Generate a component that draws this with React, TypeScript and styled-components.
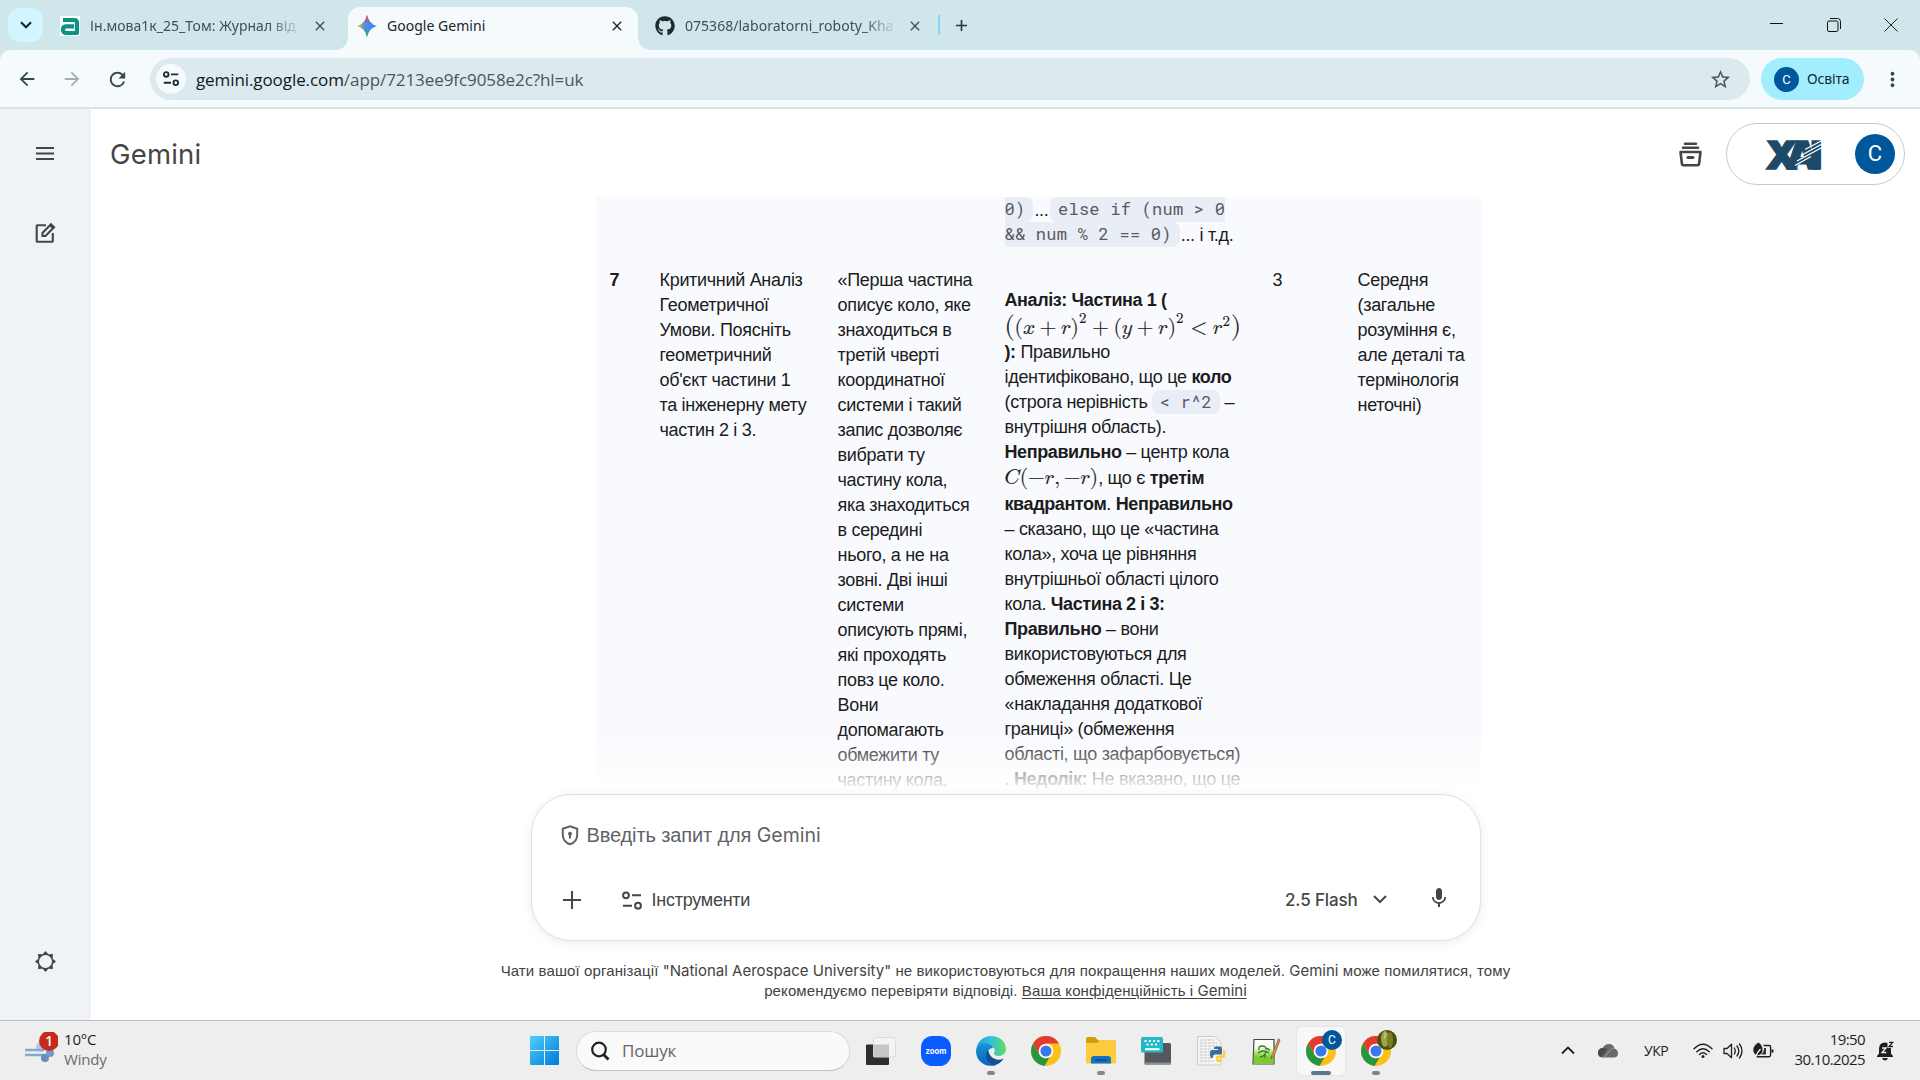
import React from 'react';
import styled, { createGlobalStyle, css } from 'styled-components';
import { MdArrowBack, MdArrowForward, MdRefresh, MdStarBorder, MdMoreVert, MdClose, MdAdd, MdMic } from 'react-icons/md';
import { FaGithub } from 'react-icons/fa';

const ui = '"Noto Sans", "Open Sans", sans-serif';
const body = '"Liberation Sans", Arial, sans-serif';

const Global = createGlobalStyle`
  * { box-sizing: border-box; }
  body { margin: 0; background: #fff; overflow: hidden; }
  svg { display: block; flex: none; }
`;

const Screen = styled.div`
  display: flex;
  flex-direction: column;
  width: 1920px;
  height: 1080px;
  overflow: hidden;
  font-family: ${body};
  color: #1b1c1d;
`;

/* ---------- browser chrome ---------- */
const TabStrip = styled.div`
  display: flex;
  align-items: flex-start;
  height: 50px;
  padding-right: 1px;
  background: #cfe6eb;
  font: 400 14px/20px ${ui};
  color: #3c5157;
`;
const TabSearch = styled.div`
  display: grid;
  place-items: center;
  width: 35px;
  height: 34px;
  margin: 8px 7px 0 8px;
  border-radius: 12px;
  background: #d1f6ff;
`;
const Tab = styled.div<{ $active?: boolean; $w: number; $pad: number; $end: number }>`
  position: relative;
  display: flex;
  align-items: center;
  width: ${p => p.$w}px;
  height: 43px;
  margin-top: 7px;
  padding: 0 ${p => p.$end}px 6px ${p => p.$pad}px;
  ${p => p.$active && css`
    background: #f5fafd;
    color: #1a2427;
    border-radius: 12px 12px 0 0;
    &::before, &::after {
      content: '';
      position: absolute;
      bottom: 0;
      width: 12px;
      height: 12px;
    }
    &::before { left: -12px; background: radial-gradient(circle at 0 0, transparent 11.5px, #f5fafd 12px); }
    &::after { right: -12px; background: radial-gradient(circle at 100% 0, transparent 11.5px, #f5fafd 12px); }
  `}
`;
const TabTitle = styled.div<{ $fade?: boolean }>`
  flex: 1;
  margin: 0 10px;
  white-space: nowrap;
  letter-spacing: 0.03px;
  ${p => p.$fade && css`mask-image: linear-gradient(90deg, #000 calc(100% - 34px), transparent 100%);`}
`;
const TabDivider = styled.div`
  width: 2px;
  height: 20px;
  margin: 15px 12px 0 0;
  background: #7fdbee;
`;
const NewTab = styled.div`
  margin-top: 16px;
  color: #243438;
`;
const WindowControls = styled.div`
  display: flex;
  margin-left: auto;
`;
const WindowButton = styled.div`
  display: grid;
  place-items: center;
  width: 57px;
  height: 49px;
`;
const ToolbarBack = styled.div`
  background: #cfe6eb;
`;
const Toolbar = styled.div`
  display: flex;
  align-items: center;
  height: 59px;
  padding: 1px 14px 0 14px;
  border-bottom: 2px solid #d8e3e6;
  border-radius: 10px 10px 0 0;
  background: #f5fafd;
`;
const NavButton = styled.div<{ $dim?: boolean }>`
  display: grid;
  place-items: center;
  width: 26px;
  margin-right: 19.3px;
  color: ${p => (p.$dim ? '#a5afb2' : '#33484e')};
`;
const Omnibox = styled.div`
  display: flex;
  align-items: center;
  width: 1600px;
  height: 42px;
  padding: 0 18px 0 6px;
  border-radius: 21px;
  background: #dceaef;
  color: #49575b;
  font: 400 17px/24px "Open Sans", ${ui};
  letter-spacing: -0.08px;
`;
const SiteInfo = styled.div`
  display: grid;
  place-items: center;
  width: 30px;
  height: 30px;
  margin-right: 10px;
  border-radius: 50%;
  background: #f5fafd;
`;
const Url = styled.div`
  flex: 1;
  padding-top: 1px;
  b { font-weight: 400; color: #11191b; }
`;
const ProfileChip = styled.div`
  display: flex;
  align-items: center;
  gap: 8px;
  width: 103px;
  height: 42px;
  margin-left: 11px;
  padding-left: 13px;
  border-radius: 21px;
  background: #a3eefe;
  color: #10282e;
  font: 400 14px/20px ${ui};
  letter-spacing: -0.12px;
`;
const Avatar = styled.div<{ $size: number; $font: number }>`
  display: grid;
  place-items: center;
  width: ${p => p.$size}px;
  height: ${p => p.$size}px;
  border-radius: 50%;
  background: #01579b;
  color: #fff;
  font: 400 ${p => p.$font}px/1 Roboto, sans-serif;
  letter-spacing: 0;
`;
const Menu = styled.div`
  margin-left: 17px;
  color: #33484e;
`;

/* ---------- application ---------- */
const AppBody = styled.div`
  display: flex;
  height: 911px;
`;
const Sidebar = styled.div`
  display: flex;
  flex-direction: column;
  align-items: center;
  width: 91px;
  padding: 32px 1px 47px 0;
  background: #eff3f8;
`;
const SidebarItem = styled.div<{ $gap?: number; $end?: boolean }>`
  display: grid;
  place-items: center;
  height: 24px;
  margin-top: ${p => (p.$end ? 'auto' : `${p.$gap ?? 0}px`)};
`;
const Main = styled.div`
  display: flex;
  flex-direction: column;
  flex: 1;
  align-items: center;
  background: #fff;
`;
const Header = styled.div`
  display: flex;
  align-items: center;
  width: 100%;
  height: 88px;
  padding: 2px 15px 0 18px;
`;
const Brand = styled.div`
  flex: 1;
  padding-left: 1px;
  font: 400 27.5px/36px Inter, sans-serif;
  letter-spacing: 0.2px;
  color: #444746;
`;
const AccountPill = styled.div`
  display: flex;
  align-items: center;
  justify-content: space-between;
  width: 179px;
  height: 62px;
  margin-left: 24px;
  padding: 0 9px 0 38px;
  border: 1px solid #c7c9c8;
  border-radius: 31px;
`;
const Conversation = styled.div`
  position: relative;
  width: 950px;
  height: 597px;
  overflow: hidden;
`;
const Fade = styled.div`
  position: absolute;
  left: 0;
  right: 0;
  bottom: 0;
  height: 62px;
  background: linear-gradient(rgba(255, 255, 255, 0), rgba(255, 255, 255, 0.35) 40%, #fff 97%);
`;
const Table = styled.div`
  display: grid;
  grid-template-columns: 50px 178px 167px 268px 85px 137px;
  align-items: start;
  height: 597px;
  margin-left: 65px;
  background: #f9fafe;
  font: 400 18px/25px ${body};
  letter-spacing: -0.31px;
  grid-template-rows: 71px 1fr;
`;
const Cell = styled.div<{ $col?: number; $top?: number; $bold?: boolean }>`
  ${p => p.$col && css`grid-column: ${p.$col};`}
  padding: ${p => p.$top ?? 0}px 0 0 14px;
  font-weight: ${p => (p.$bold ? 700 : 400)};
  white-space: nowrap;
  b { letter-spacing: -0.4px; }
`;
const Line = styled.div<{ $math?: boolean }>`
  height: ${p => (p.$math ? 27 : 25)}px;
  line-height: ${p => (p.$math ? 27 : 25)}px;
`;
const CodeLine = styled.div`
  display: flex;
  height: 25px;
`;
const Dots = styled.span<{ $gap?: number }>`
  padding: 1px ${p => p.$gap ?? 0}px 0 1px;
`;
const Code = styled.code<{ $l?: boolean; $r?: boolean; $inline?: boolean }>`
  display: inline-block;
  height: ${p => (p.$inline ? 24 : 25)}px;
  padding: 0 ${p => (p.$r ? 8 : 0)}px 0 ${p => (p.$l ? 7.5 : 0)}px;
  border-radius: ${p => (p.$l ? '8px' : '0')} ${p => (p.$r ? '8px 8px' : '0 0')} ${p => (p.$l ? '8px' : '0')};
  background: #e9edf6;
  color: #575b5f;
  font: 400 17px/24px "Roboto Mono", "Liberation Mono", monospace;
  letter-spacing: 0.25px;
  vertical-align: top;
  white-space: pre;
`;
const MathText = styled.span`
  letter-spacing: 0;
  math {
    font-family: "Latin Modern Math", "Liberation Serif", serif;
    font-size: 21.3px;
    -webkit-text-stroke: 0.2px #1b1c1d;
  }
  .outer { font-size: 1.22em; }
`;
const Composer = styled.div`
  display: flex;
  flex-direction: column;
  width: 950px;
  height: 147px;
  padding: 25px 28px 0 29px;
  border: 1px solid #dfe1e2;
  border-radius: 40px;
  background: #fff;
  box-shadow: 0 2px 10px rgba(60, 64, 67, 0.1);
  z-index: 1;
`;
const Prompt = styled.div`
  display: flex;
  align-items: center;
  gap: 8px;
  height: 30px;
  color: #5f6368;
  font-size: 20px;
  letter-spacing: -0.12px;
  span { font-family: Inter, sans-serif; font-size: 19.5px; letter-spacing: 0; }
`;
const Actions = styled.div`
  display: flex;
  align-items: center;
  height: 30px;
  margin-top: 35px;
  color: #444746;
  font-size: 18px;
  letter-spacing: -0.25px;
`;
const ToolsGap = styled.div`
  width: 39px;
`;
const ToolsLabel = styled.div`
  flex: 1;
  margin-left: 10px;
`;
const Model = styled.div`
  margin-right: 14px;
  font: 500 17px/24px Inter, sans-serif;
  letter-spacing: -0.15px;
`;
const MicSlot = styled.div`
  margin: -5px 1px 0 39px;
`;
const Disclaimer = styled.div`
  margin-top: 20px;
  color: #3f4342;
  font: 400 15px/20px ${body};
  letter-spacing: 0.11px;
  text-align: center;
  white-space: nowrap;
  span { font-family: Inter, sans-serif; letter-spacing: 0; }
  u { text-underline-offset: 2px; }
`;

/* ---------- taskbar ---------- */
const Taskbar = styled.div`
  display: flex;
  align-items: center;
  height: 60px;
  border-top: 1px solid #bdbdbd;
  background: #eee;
  color: #1f1f1f;
  font: 400 15px/20px "Open Sans", ${ui};
`;
const Weather = styled.div`
  display: flex;
  gap: 6px;
  width: 530px;
  padding-left: 24px;
  letter-spacing: -0.2px;
  em { display: block; font-style: normal; color: #6a6a6a; }
`;
const WeatherText = styled.div`
  margin-top: -3px;
`;
const SearchBox = styled.div`
  display: flex;
  align-items: center;
  gap: 12px;
  width: 274px;
  height: 40px;
  margin: 0 7px 0 17px;
  padding-left: 13px;
  border: 1px solid #dcdcdc;
  border-bottom-color: #c4c4c4;
  border-radius: 20px;
  background: #fafafa;
  color: #666;
  font-size: 17px;
  letter-spacing: -0.2px;
`;
const Slot = styled.div<{ $on?: boolean }>`
  position: relative;
  display: grid;
  place-items: center;
  width: 48px;
  height: 48px;
  margin-right: 7px;
  border-radius: 5px;
  ${p => p.$on && css`background: #f8f8f8; box-shadow: 0 0 1px 1px #e6e6e6;`}
`;
const Running = styled.i<{ $on?: boolean }>`
  position: absolute;
  bottom: 0;
  width: ${p => (p.$on ? 20 : 8)}px;
  height: 4px;
  border-radius: 2px;
  background: ${p => (p.$on ? '#5c788c' : '#858585')};
`;
const Badge = styled.div`
  position: absolute;
  top: 3px;
  right: 3px;
`;
const Tray = styled.div`
  display: flex;
  align-items: center;
  margin-left: auto;
  padding-right: 26px;
`;
const CloudSlot = styled.div`
  margin-left: 23px;
`;
const Lang = styled.div`
  width: 25px;
  margin: 0 24px 0 26px;
  font-size: 14px;
  letter-spacing: -0.5px;
`;
const Indicators = styled.div`
  display: flex;
  align-items: center;
  gap: 10px;
`;
const Clock = styled.div`
  width: 73px;
  margin: -3px 12px 0 18px;
  letter-spacing: -0.6px;
  text-align: right;
`;

/* ---------- drawings ---------- */
const Tune = ({ w, s, c }: { w: number; s: number; c: string }) => (
  <svg width={w} height={w * 0.95} viewBox="0 0 20 19" fill="none" stroke={c} strokeWidth={s}>
    <circle cx="4" cy="4.3" r="2.9" /><path d="M10 4.3h9M1 14.7h9" /><circle cx="16" cy="14.7" r="2.9" />
  </svg>
);
const Gem = () => (
  <svg width="20" height="22" viewBox="0 0 20 22">
    <defs>
      <linearGradient id="gm" x1="0" y1=".5" x2="1" y2=".5"><stop offset="0" stopColor="#fbbc04" /><stop offset=".4" stopColor="#4a90e8" /><stop offset="1" stopColor="#3b82f6" /></linearGradient>
      <linearGradient id="gt" x1=".5" y1="0" x2=".5" y2="1"><stop offset="0" stopColor="#f0433a" /><stop offset=".42" stopColor="#f0433a" stopOpacity="0" /><stop offset=".62" stopColor="#34a853" stopOpacity="0" /><stop offset="1" stopColor="#34a853" /></linearGradient>
    </defs>
    <path d="M10 0Q12 9 20 11Q12 13 10 22Q8 13 0 11Q8 9 10 0z" fill="url(#gm)" />
    <path d="M10 0Q12 9 20 11Q12 13 10 22Q8 13 0 11Q8 9 10 0z" fill="url(#gt)" />
  </svg>
);
const Journal = () => (
  <svg width="20" height="20" viewBox="0 0 20 20">
    <rect width="20" height="20" fill="#fff" />
    <path d="M3 4h11q3 0 3 3v10H6.500q-3.500 0-3.500-3.300t3.500-3.300H14" fill="none" stroke="#0a9384" strokeWidth="4.200" strokeLinejoin="round" />
  </svg>
);
const EditIcon = () => (
  <svg width="22" height="22" viewBox="0 0 22 22" fill="none" stroke="#444746" strokeWidth="2.100">
    <path d="M12 3.200H3.500q-.800 0-.800.800v15q0 .800.800.800h14.500q.800 0 .800-.800V11" />
    <path d="M8.500 14v-3l8.500-8.800 3 3L11.500 14z" /><path d="M15 3.500l4 4 1.800-2-3.500-3.600z" fill="#444746" stroke="none" />
  </svg>
);
const Gear = () => (
  <svg width="21" height="21" viewBox="0 0 22 22">
    <path d="M11 0l3 3.500 4.800-.300-.300 4.800L22 11l-3.500 3 .300 4.800-4.800-.300L11 22l-3-3.500-4.800.300.300-4.800L0 11l3.500-3-.300-4.800 4.800.300zM11 4.200a6.800 6.800 0 100 13.600 6.800 6.800 0 000-13.600z" fill="#444746" fillRule="evenodd" />
  </svg>
);
const Archive = () => (
  <svg width="23" height="25" viewBox="0 0 23 25" fill="none" stroke="#444746" strokeWidth="2.600" strokeLinecap="round" strokeLinejoin="round">
    <path d="M6 1.700h11M4 5.800h15M1.500 10h20l-1.400 11.700q-.200 1.600-1.700 1.600H4.600q-1.500 0-1.700-1.600z" /><path d="M9 15.400h5" strokeWidth="3" />
  </svg>
);
const University = () => (
  <svg width="56" height="31" viewBox="0 0 56 31" overflow="visible">
    <g transform="scale(1.05 1)">
      <text x="0.500 20 43" y="29.500" fill="#1d4a69" stroke="#1d4a69" strokeWidth="1.400" fontFamily="Inter" fontWeight="900" fontSize="39">XAI</text>
    </g>
    <path d="M40 10.500L57 1.500M36 16.500L57 5M32 22L57 8.500M30 26.500L46 17.500" stroke="#fff" strokeWidth="1.400" />
  </svg>
);
const Shield = () => (
  <svg width="18" height="21" viewBox="0 0 18 21" fill="none" stroke="#5f6368" strokeWidth="2">
    <path d="M9 1.300l7.200 2.500v6.200c0 4.300-3 7.800-7.200 9.300-4.200-1.500-7.200-5-7.200-9.300V3.800z" />
    <circle cx="9" cy="8.800" r="2" fill="#5f6368" stroke="none" /><path d="M9 9.500v4" />
  </svg>
);
const Chrome = () => (
  <svg width="30" height="30" viewBox="0 0 30 30">
    <circle cx="15" cy="15" r="15" fill="#fbc116" />
    <path d="M2 7.500A15 15 0 0128 7.500H15L8.500 18.800z" fill="#e33b2e" />
    <path d="M2 7.500L8.500 18.750Q11 22 14.500 22.500L19 20.500 13.500 29.900A15 15 0 012 7.500z" fill="#269643" />
    <circle cx="15" cy="15" r="7.300" fill="#fff" /><circle cx="15" cy="15" r="5.600" fill="#3b78e7" />
  </svg>
);
const Edge = () => (
  <svg width="30" height="30" viewBox="0 0 30 30">
    <defs>
      <linearGradient id="e1" x1="0" x2="1"><stop offset="0" stopColor="#1f9fdd" /><stop offset=".5" stopColor="#35c1d8" /><stop offset="1" stopColor="#62dd5a" /></linearGradient>
      <linearGradient id="e2" x1="0" y1="0" x2="0" y2="1"><stop offset="0" stopColor="#1793d8" /><stop offset="1" stopColor="#0c61ba" /></linearGradient>
    </defs>
    <path d="M.300 13C1.500 5 8 0 15 0c9 0 15 6 15 13 0 4-3 7-7 7-3.500 0-5.500-1.500-5-3 1.500-1.500 1-5-2-6.500C10 7.500 3 9 .300 13z" fill="url(#e1)" />
    <path d="M0 15c0-5 5-8 10-7.500 5 .500 7 3 7 4.500-4 0-6 4-5.500 8 .500 5 4 8.500 8 9.200C9 32 0 25 0 15z" fill="url(#e2)" />
    <path d="M12 13.500c-4 5-2 13 6 15.900 4-.900 7.500-3.400 9.700-6.900-6 3-14 .500-15.700-9z" fill="#114f96" />
  </svg>
);
const Folder = () => (
  <svg width="30" height="27" viewBox="0 0 30 27">
    <path d="M0 2q0-2 2-2h7l3.500 3.500H28q2 0 2 2V10H0z" fill="#d99a08" />
    <path d="M0 6h11l3-2.500h16V25q0 1.500-1.500 1.500h-27Q0 26.500 0 25z" fill="#fccb3e" />
    <path d="M5 26.500V22q0-3 3-3h14q3 0 3 3v4.500z" fill="#1371bf" /><path d="M9 23h12" stroke="#0b4d86" strokeWidth="1.500" />
  </svg>
);
const Keyboard = () => (
  <svg width="30" height="28" viewBox="0 0 30 28">
    <rect x="3.500" y="6" width="26.500" height="21.500" rx="1.500" fill="#54585c" /><path d="M3.500 26.500H30" stroke="#8d9194" strokeWidth="2" />
    <rect width="22" height="15.500" rx="1.500" fill="#22b8c8" />
    <path d="M3.500 4h16M5.500 7.500h13" stroke="#fff" strokeWidth="2" strokeDasharray="2 2.300" /><path d="M4 12.200h14.500" stroke="#fff" strokeWidth="2" />
  </svg>
);
const PythonFile = () => (
  <svg width="30" height="30" viewBox="0 0 30 30">
    <path d="M1.500.500H19l6 6V29H1.500z" fill="#f4f4f4" stroke="#ccc" />
    <path d="M4 4h14M4 7h17M4 10h18M4 13h13M4 16h11M4 19h10M4 22h12M4 25h14" stroke="#c4c4c4" strokeDasharray="3 1" />
    <path d="M18 12q0-1.500 2-1.500h4q2 0 2 2V17q0 1.500-2 1.500h-5q-2 0-2 2V22h-1q-2 0-2-4t2-4h6v-1h-4z" fill="#366f9f" />
    <path d="M27 14h1q1.500 0 1.500 4t-2 4H22v1h4v1.500q0 1.500-3 1.500t-3-1.500V21q0-1.500 2-1.500h3q2 0 2-2z" fill="#ffd043" />
  </svg>
);
const Notepad = () => (
  <svg width="29" height="28" viewBox="0 0 29 28">
    <defs><linearGradient id="np" x1="0" y1="0" x2="0" y2="1"><stop offset="0" stopColor="#eef8e2" /><stop offset=".6" stopColor="#7ccb2c" /></linearGradient></defs>
    <path d="M2 2.500h20V27H1z" fill="#fbfdf8" stroke="#444" strokeWidth="1.200" /><path d="M2 12q9-3 19.500 0v14.500H1.700z" fill="url(#np)" />
    <path d="M7 13q-1-4 3-4t4 3q4-1 3 2M6 16q5-4 11 0M8 20q4 0 6-5M13 21v-4" fill="none" stroke="#3c7a2a" strokeWidth="1.300" />
    <path d="M26.500 2L20 18l-1 4 3-3 6-16z" fill="#e5a23b" stroke="#7a4f1c" strokeWidth=".700" /><path d="M26 1.500l2.300 1-.700 2-2.300-1z" fill="#d06a6a" />
  </svg>
);
const TaskView = () => (
  <svg width="30" height="28" viewBox="0 0 30 28">
    <rect x="0" y="7.500" width="23" height="20.500" rx="1" fill="#2d2d2d" /><rect x="7.500" y=".500" width="22" height="19.500" rx="1" fill="#f4f4f4" stroke="#dcdcdc" />
    <path d="M7.500 7.500H23V20H7.500z" fill="#c6c6c6" />
  </svg>
);
const Zoom = () => (
  <svg width="30" height="30" viewBox="0 0 30 30">
    <rect width="30" height="30" rx="11.500" fill="#0b5cff" />
    <text x="4.500" y="17.500" textLength="21" lengthAdjust="spacingAndGlyphs" fontFamily="Inter" fontWeight="700" fontSize="8.500" fill="#fff">zoom</text>
  </svg>
);
const Windows = () => (
  <svg width="29" height="29" viewBox="0 0 29 29">
    <defs><linearGradient id="win" x1="0" y1="0" x2="1" y2="1"><stop offset="0" stopColor="#50d0fc" /><stop offset="1" stopColor="#0078d4" /></linearGradient></defs>
    <path d="M1 0h13v14H0V1q0-1 1-1zM15 0h13q1 0 1 1v13H15zM0 15h14v14H1q-1 0-1-1zM15 15h14v13q0 1-1 1H15z" fill="url(#win)" />
  </svg>
);
const Wind = () => (
  <svg width="34" height="34" viewBox="0 0 34 34">
    <circle cx="17" cy="15" r="5" fill="#b3c8e4" /><path d="M1 18h19M1 23h22" stroke="#86a9cf" strokeWidth="2.600" /><circle cx="21" cy="26" r="4" fill="#6790b5" /><circle cx="26" cy="21" r="4" fill="#7799c3" />
    <circle cx="25" cy="9" r="10" fill="#c42b1c" />
    <text x="25" y="14" textAnchor="middle" fontFamily="Open Sans" fontWeight="600" fontSize="13.500" fill="#fff">1</text>
  </svg>
);
const Pear = () => (
  <svg width="20" height="20" viewBox="0 0 20 20">
    <circle cx="10" cy="10" r="10" fill="#4b4f0e" /><ellipse cx="8" cy="9" rx="4" ry="8" fill="#9ba345" /><ellipse cx="13" cy="10" rx="3" ry="8" fill="#76801f" /><path d="M7 3q3 2 0 5" stroke="#d5d9a0" strokeWidth="1.200" fill="none" />
  </svg>
);
const Wifi = () => (
  <svg width="20" height="16" viewBox="0 0 20 16" fill="none" stroke="#1f1f1f" strokeWidth="1.400" strokeLinecap="round">
    <path d="M1 5.800q9-9 18 0M3.800 8.700q6.200-6 12.400 0M6.500 11.400q3.500-3.200 7 0" /><circle cx="10" cy="13.600" r="1.500" fill="#1f1f1f" stroke="none" />
  </svg>
);
const Volume = () => (
  <svg width="20" height="18" viewBox="0 0 20 18" fill="none" stroke="#1f1f1f" strokeWidth="1.300" strokeLinecap="round" strokeLinejoin="round">
    <path d="M1 6.500h3L8.500 2.300v13.400L4 11.500H1zM11.300 6q2 3 0 6M14 4q3.600 5 0 10M16.500 2q5 7 0 14" />
  </svg>
);
const Battery = () => (
  <svg width="21" height="17" viewBox="0 0 21 17" fill="none" stroke="#1f1f1f" strokeWidth="1.400">
    <path d="M10.500 3.500H16q1.600 0 1.600 1.600v8q0 1.600-1.600 1.600H3.500" /><path d="M18.500 7.500h2v3h-2z" fill="#1f1f1f" stroke="none" />
    <path d="M5.500.500Q10 4 9.500 8.500T4 13.500Q0 11.500.300 7.500T5.500.500z" fill="#1f1f1f" stroke="none" /><path d="M13 6v6.500H8Q11 10.500 11 6z" fill="#333" stroke="none" /><path d="M2.500 15q2-5 5-8" stroke="#eee" />
  </svg>
);
const Cloud = () => (
  <svg width="20" height="14" viewBox="0 0 20 14">
    <path d="M5 13.500Q0 13.500 0 9t4.500-5Q7 0 11 0q4.500 0 5.500 4.500Q20 5.500 20 9.500q0 4-4.500 4z" fill="#6a6a6a" /><path d="M0 9q0-4.500 4.500-5 2.500-.500 5 1.500L3.500 13Q0 12 0 9z" fill="#4a4a4a" /><path d="M6 13.500L13 5.500q2-2 3.500-1" fill="none" stroke="#999" />
  </svg>
);
const Bell = () => (
  <svg width="17" height="20" viewBox="0 0 17 20">
    <path d="M0 15l2-2.500V8q0-6.500 6-6.500t6 6.500v4.500l2 2.500v1H0zM5 17h6q-1 2.500-3 2.500T5 17z" fill="#1f1f1f" />
    <rect x="10.500" y="0" width="6.500" height="7" fill="#eee" />
    <path d="M5 7h4l-4 4.500h4.300" fill="none" stroke="#eee" strokeWidth="1.300" /><path d="M12 1.300h3.500L12 5.500h4" fill="none" stroke="#1f1f1f" strokeWidth="1.300" />
  </svg>
);

const question = ['Критичний Аналіз', 'Геометричної', 'Умови. Поясніть', 'геометричний', "об'єкт частини 1", 'та інженерну мету', 'частин 2 і 3.'];
const answer = ['«Перша частина', 'описує коло, яке', 'знаходиться в', 'третій чверті', 'координатної', 'системи і такий', 'запис дозволяє', 'вибрати ту', 'частину кола,', 'яка знаходиться', 'в середині', 'нього, а не на', 'зовні. Дві інші', 'системи', 'описують прямі,', 'які проходять', 'повз це коло.', 'Вони', 'допомагають', 'обмежити ту', 'частину кола,'];
const level = ['Середня', '(загальне', 'розуміння є,', 'але деталі та', 'термінологія', 'неточні)'];
const lines = (list: string[]) => list.map((t, i) => <Line key={i}>{t}</Line>);

/* Brackets are set as plain identifiers so that they carry no side space. */
const Br = ({ children, outer }: { children: string; outer?: boolean }) => (
  <mi mathvariant="normal" className={outer ? 'outer' : undefined}>{children}</mi>
);
const Minus = () => <mo form="prefix" lspace="0" rspace="0">−</mo>;
const Squared = ({ children }: { children: React.ReactNode }) => <msup>{children}<mn>2</mn></msup>;

export default function App() {
  return (
    <Screen>
      <Global />
      <TabStrip>
        <TabSearch>
          <svg width="12" height="8" viewBox="0 0 12 8" fill="none" stroke="#16282d" strokeWidth="2.200"><path d="M1 1.200l5 5 5-5" /></svg>
        </TabSearch>
        <Tab $w={298} $pad={10} $end={20}>
          <Journal /><TabTitle $fade>Ін.мова1к_25_Том: Журнал від</TabTitle><MdClose size={16} />
        </Tab>
        <Tab $w={290} $pad={9} $end={13} $active>
          <Gem /><TabTitle>Google Gemini</TabTitle><MdClose size={16} />
        </Tab>
        <Tab $w={300} $pad={17} $end={15}>
          <FaGithub size={20} color="#1f2a30" /><TabTitle $fade>075368/laboratorni_roboty_Kha</TabTitle><MdClose size={16} />
        </Tab>
        <TabDivider />
        <NewTab><MdAdd size={19} /></NewTab>
        <WindowControls>
          <WindowButton><svg width="13" height="4"><path d="M0 .500h13" stroke="#111" /></svg></WindowButton>
          <WindowButton>
            <svg width="14" height="14" fill="none" stroke="#111"><rect x=".500" y="3" width="10.500" height="10.500" rx="1.500" /><path d="M3 .500h7.500q3 0 3 3V11" /></svg>
          </WindowButton>
          <WindowButton><svg width="14" height="14" stroke="#222"><path d="M.500.500l13 13M13.500.500l-13 13" /></svg></WindowButton>
        </WindowControls>
      </TabStrip>
      <ToolbarBack>
        <Toolbar>
          <NavButton><MdArrowBack size={22} /></NavButton>
          <NavButton $dim><MdArrowForward size={22} /></NavButton>
          <NavButton><MdRefresh size={23} /></NavButton>
          <Omnibox>
            <SiteInfo><Tune w={16} s={2.3} c="#202c30" /></SiteInfo>
            <Url><b>gemini.google.com</b>/app/7213ee9fc9058e2c?hl=uk</Url>
            <MdStarBorder size={23} />
          </Omnibox>
          <ProfileChip><Avatar $size={25} $font={13}>C</Avatar>Освіта</ProfileChip>
          <Menu><MdMoreVert size={23} /></Menu>
        </Toolbar>
      </ToolbarBack>

      <AppBody>
        <Sidebar>
          <SidebarItem>
            <svg width="18" height="14" stroke="#444746" strokeWidth="2"><path d="M0 2h18M0 7.500h18M0 13h18" /></svg>
          </SidebarItem>
          <SidebarItem $gap={56}><EditIcon /></SidebarItem>
          <SidebarItem $end><Gear /></SidebarItem>
        </Sidebar>
        <Main>
          <Header>
            <Brand>Gemini</Brand>
            <Archive />
            <AccountPill><University /><Avatar $size={40} $font={22}>C</Avatar></AccountPill>
          </Header>
          <Conversation>
            <Table>
              <Cell $col={4}>
                <CodeLine><Code $r>0)</Code><Dots $gap={2}>...</Dots><Code $l>else if (num &gt; 0</Code></CodeLine>
                <CodeLine><Code $r>&amp;&amp; num % 2 == 0)</Code><Dots>... і т.д.</Dots></CodeLine>
              </Cell>
              <Cell $col={1} $bold>7</Cell>
              <Cell>{lines(question)}</Cell>
              <Cell>{lines(answer)}</Cell>
              <Cell $top={20}>
                <Line><b>Аналіз: Частина 1 (</b></Line>
                <Line $math>
                  <MathText>
                    <math>
                      <Br outer>(</Br><Br>(</Br><mi>x</mi><mo>+</mo><mi>r</mi><Squared><Br>)</Br></Squared>
                      <mo>+</mo><Br>(</Br><mi>y</mi><mo>+</mo><mi>r</mi><Squared><Br>)</Br></Squared>
                      <mo>&lt;</mo><Squared><mi>r</mi></Squared><Br outer>)</Br>
                    </math>
                  </MathText>
                </Line>
                <Line><b>):</b> Правильно</Line>
                <Line>ідентифіковано, що це <b>коло</b></Line>
                <Line>(строга нерівність <Code $l $r $inline>&lt; r^2</Code> –</Line>
                <Line>внутрішня область).</Line>
                <Line><b>Неправильно</b> – центр кола</Line>
                <Line $math>
                  <MathText>
                    <math><mi>C</mi><Br>(</Br><Minus /><mi>r</mi><mo>,</mo><Minus /><mi>r</mi><Br>)</Br></math>
                  </MathText>, що є <b>третім</b>
                </Line>
                <Line><b>квадрантом</b>. <b>Неправильно</b></Line>
                <Line>– сказано, що це «частина</Line>
                <Line>кола», хоча це рівняння</Line>
                <Line>внутрішньої області цілого</Line>
                <Line>кола. <b>Частина 2 і 3:</b></Line>
                <Line><b>Правильно</b> – вони</Line>
                <Line>використовуються для</Line>
                <Line>обмеження області. Це</Line>
                <Line>«накладання додаткової</Line>
                <Line>границі» (обмеження</Line>
                <Line>області, що зафарбовується)</Line>
                <Line>. <b>Недолік:</b> Не вказано, що це</Line>
              </Cell>
              <Cell>3</Cell>
              <Cell>{lines(level)}</Cell>
            </Table>
            <Fade />
          </Conversation>
          <Composer>
            <Prompt><Shield /><div>Введіть запит для <span>Gemini</span></div></Prompt>
            <Actions>
              <svg width="22" height="20" stroke="#444746" strokeWidth="2"><path d="M2 10h18M11 1v18" /></svg>
              <ToolsGap />
              <Tune w={20} s={2} c="#444746" />
              <ToolsLabel>Інструменти</ToolsLabel>
              <Model>2.5 Flash</Model>
              <svg width="16" height="10" viewBox="0 0 16 10" fill="none" stroke="#444746" strokeWidth="2"><path d="M2 1l6 6 6-6" /></svg>
              <MicSlot><MdMic size={24} /></MicSlot>
            </Actions>
          </Composer>
          <Disclaimer>
            Чати вашої організації <span>"National Aerospace University"</span> не використовуються для покращення наших моделей. <span>Gemini</span> може помилятися, тому<br />
            рекомендуємо перевіряти відповіді. <u>Ваша конфіденційність і <span>Gemini</span></u>
          </Disclaimer>
        </Main>
      </AppBody>

      <Taskbar>
        <Weather><Wind /><WeatherText>10°C<em>Windy</em></WeatherText></Weather>
        <Windows />
        <SearchBox>
          <svg width="20" height="20" fill="none" stroke="#222" strokeWidth="2.200"><circle cx="9" cy="8.500" r="6.800" /><path d="M13.500 13.500l5 5" strokeWidth="2.800" /></svg>
          Пошук
        </SearchBox>
        <Slot><TaskView /></Slot>
        <Slot><Zoom /></Slot>
        <Slot><Edge /><Running /></Slot>
        <Slot><Chrome /></Slot>
        <Slot><Folder /><Running /></Slot>
        <Slot><Keyboard /></Slot>
        <Slot><PythonFile /></Slot>
        <Slot><Notepad /></Slot>
        <Slot $on><Chrome /><Badge><Avatar $size={20} $font={12}>C</Avatar></Badge><Running $on /></Slot>
        <Slot><Chrome /><Badge><Pear /></Badge><Running /></Slot>
        <Tray>
          <svg width="14" height="9" viewBox="0 0 14 9" fill="none" stroke="#1f1f1f" strokeWidth="1.800"><path d="M1 7.500l6-6 6 6" /></svg>
          <CloudSlot><Cloud /></CloudSlot>
          <Lang>УКР</Lang>
          <Indicators><Wifi /><Volume /><Battery /></Indicators>
          <Clock>19:50<br />30.10.2025</Clock>
          <Bell />
        </Tray>
      </Taskbar>
    </Screen>
  );
}
